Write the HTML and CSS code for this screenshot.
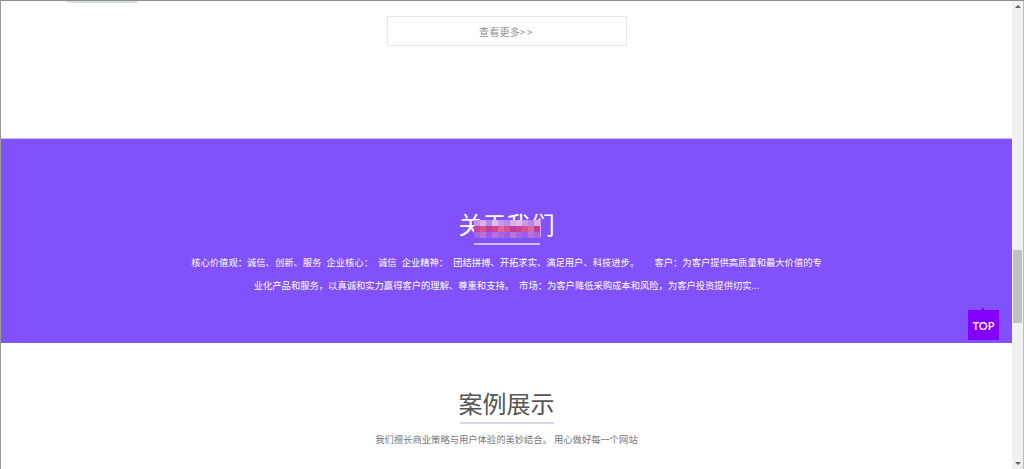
FILE: index.html
```html
<!DOCTYPE html>
<html lang="zh-CN">
<head>
<meta charset="utf-8">
<title>关于我们</title>
<link rel="stylesheet" href="styles.css">
</head>
<body>
<div class="window">
  <main class="page">
    <section class="more-sec">
      <div class="remnant"></div>
      <a class="more-btn" href="#">查看更多<span class="chev">&gt;&gt;</span></a>
    </section>
    <section class="about">
      <div class="title-wrap">
        <h2 class="about-title">关于我们</h2>
        <div class="mosaic">
          <span class="a"></span><span class="b"></span><span class="c"></span><span class="d"></span><span class="a"></span><span class="c"></span><span class="b"></span><span class="d"></span><span class="a"></span><span class="c"></span><span class="b"></span>
          <span class="e"></span><span class="f"></span><span class="g"></span><span class="e"></span><span class="h"></span><span class="f"></span><span class="g"></span><span class="e"></span><span class="f"></span><span class="h"></span><span class="g"></span>
          <span class="i"></span><span class="j"></span><span class="k"></span><span class="j"></span><span class="i"></span><span class="k"></span><span class="j"></span><span class="i"></span><span class="k"></span><span class="j"></span><span class="i"></span>
        </div>
      </div>
      <p class="about-text">核心价值观：诚信、创新、服务 企业核心： 诚信 企业精神： 团结拼搏、开拓求实、满足用户、科技进步。&nbsp;&nbsp; 客户：为客户提供高质量和最大价值的专业化产品和服务，以真诚和实力赢得客户的理解、尊重和支持。 市场：为客户降低采购成本和风险，为客户投资提供切实...</p>
    </section>
    <section class="cases">
      <h2 class="cases-title">案例展示</h2>
      <p class="cases-sub">我们擅长商业策略与用户体验的美妙结合。 用心做好每一个网站</p>
    </section>
  </main>
  <div class="scrollbar">
    <span class="arrow up"></span>
    <span class="track"><span class="thumb"></span></span>
    <span class="arrow down"></span>
  </div>
  <a class="top-btn" href="#">TOP</a>
</div>
</body>
</html>
```
FILE: styles.css
```css
* { box-sizing: border-box; }
html, body { margin: 0; padding: 0; height: 469px; overflow: hidden; background: #fff; }
body { font-family: "Noto Sans CJK SC", "Noto Sans", sans-serif; }

.window {
  position: relative;
  display: flex;
  height: 469px;
  border-top: 1px solid #8e8e8e;
  border-left: 1px solid #9a9a9a;
}
.page { flex: 1; min-width: 0; display: flex; flex-direction: column; }

.more-sec {
  position: relative;
  height: 137px;
  padding-top: 15px;
  display: flex;
  justify-content: center;
  align-items: flex-start;
}
.remnant {
  position: absolute;
  left: 66px; top: 0;
  width: 70px; height: 2px;
  background: #d6e1dc;
}
.more-btn {
  width: 240px; height: 30px;
  border: 1px solid #e8e8e8;
  display: flex; align-items: center; justify-content: center;
  font-size: 10px; color: #929292; text-decoration: none;
  letter-spacing: 0.2px;
}
.more-btn .chev { letter-spacing: 1.5px; }

.about {
  height: 205px;
  background: #8151fb;
  border-top: 1px solid #c9b6fd;
  display: flex; flex-direction: column; align-items: center;
  padding-top: 69px;
}
.title-wrap { position: relative; display: flex; flex-direction: column; align-items: center; }
.about-title {
  margin: 0;
  font-size: 24px; line-height: 32px; font-weight: 400; color: #fff;
}
.about-title::after {
  content: ""; display: block;
  width: 66px; height: 2px; margin: 3px auto 0;
  background: #cdbdfc;
}
.mosaic {
  position: absolute; left: 15px; top: 12px;
  display: grid; grid-template-columns: repeat(11, 6px); grid-auto-rows: 6px;
}
.mosaic .a { background: #c79ae8; }
.mosaic .b { background: #dcaee6; }
.mosaic .c { background: #b986ee; }
.mosaic .d { background: #e3bbe8; }
.mosaic .e { background: #c9449c; }
.mosaic .f { background: #d6548e; }
.mosaic .g { background: #b8409f; }
.mosaic .h { background: #dd6a9a; }
.mosaic .i { background: #a265e6; }
.mosaic .j { background: #b772d8; }
.mosaic .k { background: #9b5cee; }

.about-text {
  margin: 6px 0 0;
  width: 634px;
  text-align: center;
  font-size: 9.3px; line-height: 23px; color: #fff;
  word-spacing: 3px;
}

.cases {
  display: flex; flex-direction: column; align-items: center;
  padding-top: 44px;
}
.cases-title {
  margin: 0;
  font-size: 24px; line-height: 32px; font-weight: 400; color: #555;
}
.cases-title::after {
  content: ""; display: block;
  width: 94px; height: 2px; margin: 3px auto 0;
  background: #ddd5e6;
}
.cases-sub {
  margin: 7px 0 0;
  font-size: 9.3px; line-height: 16px; color: #777;
}

.scrollbar {
  width: 12px;
  background: #f1f1f1;
  border-right: 1px solid #bdbdbd;
  display: flex; flex-direction: column; align-items: center;
}
.arrow { width: 0; height: 0; border-left: 3px solid transparent; border-right: 3px solid transparent; margin: 4px 0; }
.arrow.up { border-bottom: 3px solid #606060; }
.arrow.down { border-top: 3px solid #606060; }
.track { flex: 1; width: 100%; position: relative; }
.thumb {
  position: absolute; left: 1px; right: 1px; top: 238px; height: 73px;
  background: #c1c1c1;
}

.top-btn {
  position: absolute;
  left: 967px; top: 309px;
  width: 31px; height: 30px;
  background: #8400fa;
  color: #fff; text-decoration: none;
  font-family: "Lato", "Liberation Sans", sans-serif; font-size: 11px; font-weight: 600;
  display: flex; align-items: center; justify-content: center;
}
.top-btn::before {
  content: ""; position: absolute; left: 13px; top: -3px;
  border-left: 2px solid transparent; border-right: 2px solid transparent;
  border-bottom: 3px solid #6a1cc8;
}
```
